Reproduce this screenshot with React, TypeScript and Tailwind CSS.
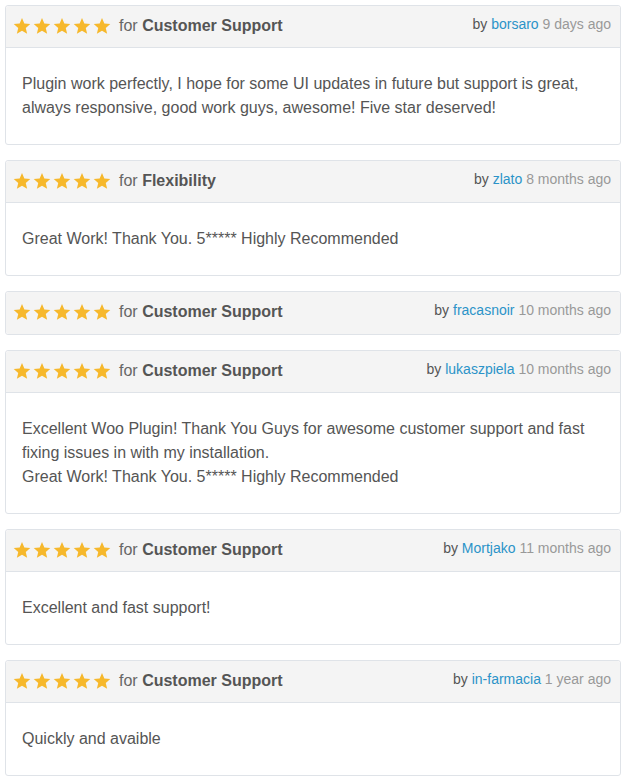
import React from "react";

type Review = {
  topic: string;
  author: string;
  when: string;
  body?: string[];
};

const reviews: Review[] = [
  {
    topic: "Customer Support",
    author: "borsaro",
    when: "9 days ago",
    body: [
      "Plugin work perfectly, I hope for some UI updates in future but support is great, always responsive, good work guys, awesome! Five star deserved!",
    ],
  },
  {
    topic: "Flexibility",
    author: "zlato",
    when: "8 months ago",
    body: ["Great Work! Thank You. 5***** Highly Recommended"],
  },
  { topic: "Customer Support", author: "fracasnoir", when: "10 months ago" },
  {
    topic: "Customer Support",
    author: "lukaszpiela",
    when: "10 months ago",
    body: [
      "Excellent Woo Plugin! Thank You Guys for awesome customer support and fast fixing issues in with my installation.",
      "Great Work! Thank You. 5***** Highly Recommended",
    ],
  },
  {
    topic: "Customer Support",
    author: "Mortjako",
    when: "11 months ago",
    body: ["Excellent and fast support!"],
  },
  {
    topic: "Customer Support",
    author: "in-farmacia",
    when: "1 year ago",
    body: ["Quickly and avaible"],
  },
];

function Star() {
  return (
    <svg width="18" height="18" viewBox="0 0 20 20" className="block">
      <path
        fill="#f6b82c"
        d="M10 1.2l2.6 6.1 6.6.5-5 4.4 1.5 6.5L10 15.3l-5.7 3.4 1.5-6.5-5-4.4 6.6-.5z"
      />
    </svg>
  );
}

function Card({ r }: { r: Review }) {
  return (
    <div className="mb-[15px] rounded-[3px] border border-[#dfe3e8] bg-white">
      <div
        className={`flex items-start justify-between bg-[#f4f4f4] pl-[7px] pr-[9px] pt-[8px] h-[42px] ${
          r.body ? "border-b border-[#dfe3e8]" : ""
        } rounded-t-[3px] ${r.body ? "" : "rounded-b-[3px]"}`}
      >
        <div className="flex items-center h-[24px]">
          <div className="flex gap-[2px] mr-[8px]">
            <Star />
            <Star />
            <Star />
            <Star />
            <Star />
          </div>
          <span className="text-[16px] leading-[24px] text-[#666]">
            for <b className="font-bold text-[#555]">{r.topic}</b>
          </span>
        </div>
        <div className="text-[14px] leading-[20px] text-[#555]">
          by <span className="text-[#2b93c8]">{r.author}</span>{" "}
          <span className="text-[#999]">{r.when}</span>
        </div>
      </div>
      {r.body && (
        <div className="px-[16px] py-[24px] text-[16px] leading-[24px] text-[#555]">
          {r.body.map((l, i) => (
            <p key={i}>{l}</p>
          ))}
        </div>
      )}
    </div>
  );
}

export default function App() {
  return (
    <div
      className="bg-white pl-[5px] pr-[7px] pt-[5px] min-h-screen"
      style={{ fontFamily: '"Liberation Sans", Arial, sans-serif' }}
    >
      {reviews.map((r, i) => (
        <Card key={i} r={r} />
      ))}
    </div>
  );
}
